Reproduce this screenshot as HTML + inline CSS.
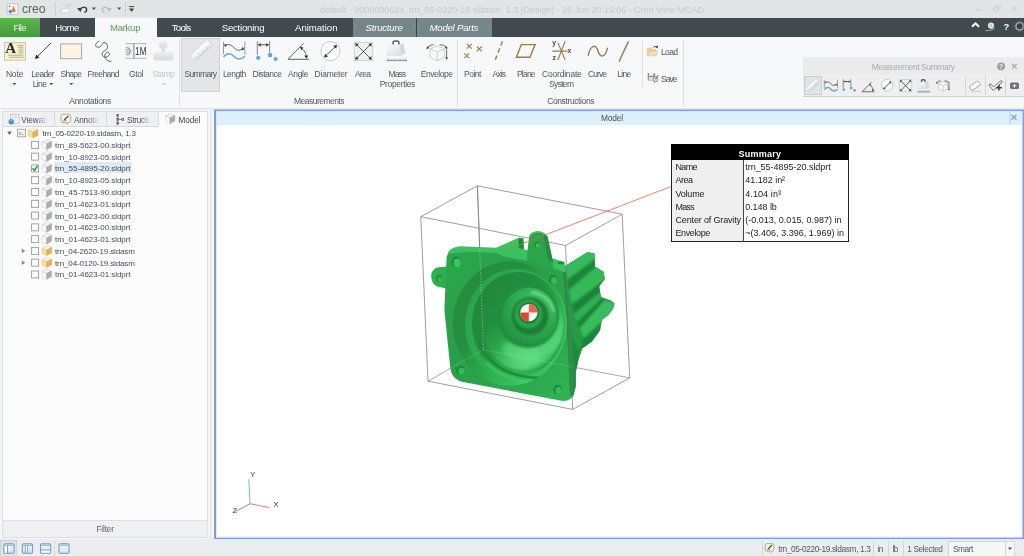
<!DOCTYPE html>
<html><head><meta charset="utf-8">
<style>
*{box-sizing:border-box;margin:0;padding:0}
html,body{width:1024px;height:556px;overflow:hidden;background:#eceeef;font-family:"Liberation Sans",sans-serif;}
.a{position:absolute}
.t{position:absolute;white-space:nowrap;font-family:"Liberation Sans",sans-serif}
svg{position:absolute;overflow:visible}
#title{left:0;top:0;width:1024px;height:18px;background:#e2e5e6}
#tabs{left:0;top:18px;width:1024px;height:19px;background:#414b4e}
#ribbon{left:0;top:37px;width:1024px;height:72px;background:#f7f8f9;border-bottom:1px solid #e4e6e8}
.sep{position:absolute;width:1px;background:#dfe2e4}
#left{left:2px;top:111px;width:206px;height:426.5px;background:#fcfcfc;border:1px solid #dde0e2}
#view{left:215px;top:110.5px;width:808.5px;height:428px;background:#fff}
#vtitle{left:216px;top:111px;width:806.4px;height:13.6px;background:#dcf0fc}
#status{left:0;top:539.4px;width:1024px;height:17px;background:#ecedee}
#w0{position:absolute;left:-8px;top:-8px;width:1040px;height:572px;background:#eceeef;filter:blur(0.4px)}
#w{position:absolute;left:8px;top:8px;width:1024px;height:556px}
</style></head><body><div id="w0"><div id="w">
<div id="title" class="a"></div>
<div class="sep" style="left:55px;top:2px;height:14px;background:#cdd1d3"></div>
<div class="sep" style="left:125px;top:2px;height:14px;background:#cdd1d3"></div>
<div id="tabs" class="a"></div>
<div class="a" style="left:0;top:18px;width:40px;height:19px;background:linear-gradient(180deg,#5fb34d 0%,#4fa844 50%,#429b3d 100%)"></div>
<div class="a" style="left:95px;top:18px;width:61.5px;height:20px;background:#f7f8f9"></div>
<div class="a" style="left:353.3px;top:18px;width:138.3px;height:19px;background:#75868b"></div>
<div class="a" style="left:416px;top:18px;width:1px;height:19px;background:#3a4548"></div>
<div id="ribbon" class="a"></div>
<!-- ribbon separators -->
<div class="sep" style="left:179px;top:40px;height:67px"></div>
<div class="sep" style="left:457px;top:40px;height:67px"></div>
<div class="sep" style="left:641.5px;top:41px;height:47px"></div>
<div class="sep" style="left:682.5px;top:40px;height:67px"></div>
<!-- Summary selected button -->
<div class="a" style="left:181.2px;top:37.5px;width:39px;height:54px;background:#e3e5e6;border:1px solid #cfd2d4"></div>
<!-- Measurement summary panel -->
<div class="a" style="left:802.5px;top:57px;width:222px;height:39.5px;background:#efefef;border-bottom:1px solid #cfd2d3"></div>
<div class="a" style="left:802.5px;top:57px;width:222px;height:18px;background:#eaebeb"></div>
<div class="a" style="left:803.5px;top:75.5px;width:18.5px;height:19.5px;background:#e2e3e4;border:1px solid #c9cccd"></div>
<div class="sep" style="left:965px;top:76px;height:19px;background:#d3d5d6"></div>
<div class="sep" style="left:985px;top:76px;height:19px;background:#d3d5d6"></div>
<div class="sep" style="left:1004.5px;top:76px;height:19px;background:#d3d5d6"></div>
<!-- left panel -->
<div class="a" style="left:0;top:109.6px;width:209.7px;height:429.6px;background:#f5f6f7"></div>
<div id="left" class="a"></div>
<div class="a" style="left:3px;top:112px;width:155px;height:14.5px;background:#eef0f1;border-bottom:1px solid #d8dbdd"></div>
<div class="sep" style="left:54px;top:112px;height:14px;background:#d8dbdd"></div>
<div class="sep" style="left:106px;top:112px;height:14px;background:#d8dbdd"></div>
<div class="sep" style="left:158px;top:112px;height:14px;background:#d8dbdd"></div>
<div class="a" style="left:54px;top:162px;width:78px;height:11px;background:#dde9f3"></div>
<div class="a" style="left:3px;top:520px;width:204px;height:17px;background:#eff0f1;border-top:1px solid #dcdfe0"></div>
<div class="a" style="left:209.7px;top:110px;width:1.8px;height:429px;background:#e2e6e9"></div>
<div class="a" style="left:211.5px;top:110px;width:2.5px;height:429px;background:#f7f8f9"></div>
<!-- viewport -->
<div id="view" class="a"></div>
<div id="vtitle" class="a"></div>
<div class="a" style="left:1009.4px;top:112px;width:1.4px;height:12px;background:#c6dcf6"></div>
<svg class="a" style="left:0;top:0" width="1024" height="556" viewBox="0 0 1024 556"><path fill-rule="evenodd" d="M214,109.6 H1024 V539.4 H214 Z M216,111 V537.4 H1022.4 V111 Z" fill="#809ddb"/><path fill-rule="evenodd" d="M216,111 H1022.4 V537.4 H216 Z M216.6,111.5 V536.8 H1021.8 V111.5 Z" fill="#cfe2fa"/></svg>
<div id="status" class="a"></div>
<!-- status cells -->
<div class="sep" style="left:762px;top:541px;height:15px;background:#d3d6d8"></div>
<div class="sep" style="left:873px;top:541px;height:15px;background:#d3d6d8"></div>
<div class="sep" style="left:888px;top:541px;height:15px;background:#d3d6d8"></div>
<div class="sep" style="left:902.5px;top:541px;height:15px;background:#d3d6d8"></div>
<div class="a" style="left:947.5px;top:540.5px;width:67.5px;height:16px;background:#f5f6f6;border:1px solid #d3d6d8;border-bottom:none"></div>
<div class="sep" style="left:1004.5px;top:541px;height:15px;background:#d3d6d8"></div>
<!-- bottom-left layout icon selected -->
<div class="a" style="left:0.4px;top:539.8px;width:16.7px;height:17px;background:#dfe3e6;border:1px solid #cdd2d5"></div>
<div class="sep" style="left:54px;top:541px;height:15px;background:#d6d9db"></div>
<!-- table -->
<div class="a" style="left:670.5px;top:143.5px;width:178.5px;height:98.5px;background:#fff;border:1px solid #222"></div>
<div class="a" style="left:670.5px;top:143.5px;width:178.5px;height:16px;background:#000"></div>
<div class="a" style="left:671.5px;top:159.5px;width:72px;height:81.5px;background:#efefef"></div>
<div class="a" style="left:743.3px;top:159.5px;width:1px;height:82px;background:#444"></div>
<svg class="a" style="left:0;top:0" width="1024" height="556" viewBox="0 0 1024 556">
<defs>
<linearGradient id="gBody" x1="0" y1="0" x2="1" y2="1">
 <stop offset="0" stop-color="#2fb552"/><stop offset="0.5" stop-color="#27a047"/><stop offset="1" stop-color="#1e8a3c"/>
</linearGradient>
<linearGradient id="gFace" x1="0" y1="0" x2="1" y2="1">
 <stop offset="0" stop-color="#2ba94c"/><stop offset="0.35" stop-color="#2a9e49"/><stop offset="0.7" stop-color="#2ca64c"/><stop offset="1" stop-color="#31b655"/>
</linearGradient>
<radialGradient id="gDish" cx="0.62" cy="0.72" r="0.75">
 <stop offset="0" stop-color="#46c96a"/><stop offset="0.35" stop-color="#2fb052"/><stop offset="0.7" stop-color="#259a45"/><stop offset="1" stop-color="#1f8a3d"/>
</radialGradient>
<radialGradient id="gDish2" cx="0.55" cy="0.75" r="0.8">
 <stop offset="0" stop-color="#5ad77c"/><stop offset="0.3" stop-color="#3cc061"/><stop offset="0.65" stop-color="#2aa64b"/><stop offset="1" stop-color="#239543"/>
</radialGradient>
<radialGradient id="gBoss" cx="0.6" cy="0.35" r="0.7">
 <stop offset="0" stop-color="#4ccf70"/><stop offset="0.5" stop-color="#2fb052"/><stop offset="1" stop-color="#238f41"/>
</radialGradient>
<linearGradient id="gA" x1="0.05" y1="0.2" x2="0.9" y2="0.9">
 <stop offset="0" stop-color="#248c40"/><stop offset="0.3" stop-color="#258f41"/><stop offset="0.55" stop-color="#2aa84b"/><stop offset="0.85" stop-color="#3ec564"/><stop offset="1" stop-color="#35ba5a"/>
</linearGradient>
<linearGradient id="gB" x1="0.05" y1="0.2" x2="0.9" y2="0.9">
 <stop offset="0" stop-color="#2ba34a"/><stop offset="0.5" stop-color="#2dae4f"/><stop offset="1" stop-color="#3cc362"/>
</linearGradient>
<linearGradient id="gC" x1="0.05" y1="0.2" x2="0.9" y2="0.9">
 <stop offset="0" stop-color="#218739"/><stop offset="0.35" stop-color="#238e40"/><stop offset="0.6" stop-color="#2aa84b"/><stop offset="0.85" stop-color="#2fb052"/><stop offset="1" stop-color="#239543"/>
</linearGradient>
<linearGradient id="gD" x1="0.1" y1="0.05" x2="0.72" y2="0.95">
 <stop offset="0" stop-color="#1f883c"/><stop offset="0.35" stop-color="#228f40"/><stop offset="0.58" stop-color="#2ba74b"/><stop offset="0.8" stop-color="#4ccd6f"/><stop offset="0.92" stop-color="#55d578"/><stop offset="1" stop-color="#3cc362"/>
</linearGradient>
<filter id="b1" x="-20%" y="-20%" width="140%" height="140%"><feGaussianBlur stdDeviation="1.2"/></filter>
<filter id="b2" x="-20%" y="-20%" width="140%" height="140%"><feGaussianBlur stdDeviation="2.5"/></filter>
<filter id="b03" x="-20%" y="-20%" width="140%" height="140%"><feGaussianBlur stdDeviation="0.35"/></filter>
<filter id="b05" x="-20%" y="-20%" width="140%" height="140%"><feGaussianBlur stdDeviation="0.5"/></filter>
<clipPath id="cDish"><ellipse cx="509.8" cy="323.6" rx="57" ry="62"/></clipPath>
<clipPath id="cFace"><path d="M448.5,253.6 Q446.6,255 446.5,259 L444.4,310 L450.2,367 Q451,378 460.6,381.5 L560,400.5 Q570.5,402.5 574,394 L575.5,386 L572.5,350 L568.7,300 L566.3,270 L565.4,272.7 L553.5,268.4 L526.6,260.8 L506,257 L496,253 L470,251.8 Z"/></clipPath>
</defs>
<!-- bbox back lines -->
<g stroke="#7c7c7c" stroke-width="0.65" fill="none">
<path d="M477.4,185.8 L483.4,349.7 M483.4,349.7 L629.7,377.9 M483.4,349.7 L428,381.2"/>
</g>
<!-- right body -->
<clipPath id="cBody"><path d="M565,266 L587.6,252 L594.7,253.8 L594.9,266.4 L603.7,271.8 L604.8,279 L599.2,286.2 L601,297 L611,300.5 L614.5,303.2 L613.6,307.7 L609,314.4 L602,319.8 L600,330.6 L592,341.4 L582.2,348.6 L578.6,359.4 L575.9,372 L575.9,386.3 L572,398 L566,330 Z"/></clipPath>
<path d="M565,266 L587.6,252 L594.7,253.8 L594.9,266.4 L603.7,271.8 L604.8,279 L599.2,286.2 L601,297 L611,300.5 L614.5,303.2 L613.6,307.7 L609,314.4 L602,319.8 L600,330.6 L592,341.4 L582.2,348.6 L578.6,359.4 L575.9,372 L575.9,386.3 L572,398 L566,330 Z" fill="#259b45"/>
<g clip-path="url(#cBody)"><g filter="url(#b1)">
<path d="M563,264 L587.6,250 L596,252 L596,258 L566,280 Z" fill="#35bb5b"/>
<path d="M566,281 L596,259 L596,267 L569,290 Z" fill="#1d863b"/>
<path d="M569,290 L596,267 L606,271 L606,278 L572,304 Z" fill="#34b959"/>
<path d="M572,305 L606,279 L600,288 L600,292 L574,314 Z" fill="#1c8239"/>
<path d="M574,314 L600,292 L602,298 L578,322 Z" fill="#2fb153"/>
<path d="M577,322 L602,298 L604,301 L580,328 Z" fill="#1c8239"/>
<path d="M580,328 L604,301 L616,303 L612,312 L584,338 Z" fill="#37bd5d"/>
<path d="M583,339 L610,314 L602,322 L600,332 L590,344 L580,352 Z" fill="#1d863b"/>
<path d="M566,330 L580,352 L576,372 L576,388 L572,400 Z" fill="#1f8a3d"/>
</g></g>
<!-- left ear -->
<path d="M447,266.5 L437,267.5 Q431,270 431.2,276.5 Q431.8,284 437,286.5 L446,288.5 Z" fill="#2db150"/>
<ellipse cx="439.3" cy="278.8" rx="3.2" ry="3.8" fill="#1f8d3e"/>
<ellipse cx="440" cy="279.6" rx="2.2" ry="2.7" fill="#35ba5a"/>
<!-- top face -->
<path d="M447.5,254 L448.5,251.5 Q452,247 460,246.2 L496.1,247.8 L519,237.6 L523.3,238.2 L523.9,249.3 L527.1,250.2 L553.5,258.7 L563.3,261.5 L566.3,268 L565.4,274 L553.5,270 L526.6,262.5 L506,258.5 L496,254.5 L470,253 Z" fill="#39c25f"/>
<path d="M518.7,238.5 L523.3,238.2 L523.9,249.4 L518.6,247.8 Z" fill="#1f8a3d" filter="url(#b03)"/>
<path d="M527.1,264 L527.1,253.3 L529.3,236 Q531.5,231.6 537.9,231.3 Q544,231.4 547.6,237.1 L553,261.9 L553.5,271 Z" fill="#2aa54a"/>
<path d="M543.6,233.4 Q546.2,234.6 547.6,237.1 L553,261.9 L548.3,260 L544,239.5 Z" fill="#228e40" filter="url(#b03)"/>
<path d="M530.3,235.2 Q532.8,232 537.9,231.9 Q542,232 544.2,234" stroke="#40ca68" stroke-width="1.4" fill="none" filter="url(#b03)"/>
<ellipse cx="537.1" cy="244.7" rx="2.8" ry="3" fill="#1f8a3d"/><ellipse cx="537.7" cy="245.4" rx="2" ry="2.2" fill="#3dbe61"/>
<ellipse cx="561.1" cy="263" rx="3.6" ry="1.3" fill="#1f8a3d"/>
<!-- flange front face -->
<path d="M448.5,253.6 Q446.6,255 446.5,259 L444.4,310 L450.2,367 Q451,378 460.6,381.5 L560,400.5 Q570.5,402.5 574,394 L575.5,386 L572.5,350 L568.7,300 L566.3,270 L565.4,272.7 L553.5,268.4 L526.6,260.8 L506,257 L496,253 L470,251.8 Z" fill="url(#gFace)"/>
<g clip-path="url(#cFace)">
<path d="M566,268 L568.7,300 L572.5,350 L575.5,386 L574,396 L570,396 L565.5,300 L563,272 Z" fill="#228f41" filter="url(#b05)"/>
</g>
<!-- dish -->
<ellipse cx="509.8" cy="323.6" rx="57" ry="62" fill="url(#gA)"/>
<g clip-path="url(#cDish)">
<ellipse cx="515.5" cy="325" rx="50.5" ry="56" fill="url(#gB)" filter="url(#b05)"/>
<ellipse cx="518.5" cy="324" rx="46.5" ry="52" fill="url(#gC)" filter="url(#b05)"/>
<ellipse cx="523" cy="323.5" rx="40.5" ry="46.5" fill="url(#gD)" filter="url(#b1)"/>
<ellipse cx="522" cy="352" rx="20" ry="11" fill="#66e088" opacity="0.55" filter="url(#b2)" transform="rotate(16 522 352)"/>
<path d="M478.5,338 C481,352 492,364.5 507,371.5 C520,377 534,378.6 548,377.6" stroke="#1f8a3d" stroke-width="2.6" fill="none" filter="url(#b05)" opacity="0.9"/>
<path d="M486,362 C498,376 520,384 548,382.5" stroke="#43cb69" stroke-width="3" fill="none" filter="url(#b1)" opacity="0.8"/>
<!-- boss -->
<ellipse cx="528" cy="316" rx="31" ry="32" fill="#218e3f" filter="url(#b1)"/>
<ellipse cx="529.5" cy="316" rx="27.5" ry="28.5" fill="url(#gBoss)" filter="url(#b05)"/>
<ellipse cx="530" cy="316" rx="18.5" ry="19" fill="#1b7d37" filter="url(#b1)"/>
<ellipse cx="528.5" cy="314" rx="14" ry="14.5" fill="#2aa54a" filter="url(#b1)"/>
<ellipse cx="528.8" cy="313" rx="10.5" ry="10.8" fill="#1d8239" filter="url(#b05)"/>
<path d="M531,292 Q549,294 554,312" stroke="#7fe39a" stroke-width="2.5" fill="none" filter="url(#b1)" opacity="0.8"/>
</g>
<!-- corner holes -->
<g>
<ellipse cx="456.2" cy="261.8" rx="4.7" ry="5.6" fill="#1f8b3d"/><ellipse cx="457.2" cy="263" rx="3.5" ry="4.2" fill="#3cc663"/>
<ellipse cx="553.2" cy="279.9" rx="4.3" ry="4.8" fill="#1f8b3d"/><ellipse cx="554.1" cy="280.8" rx="3.1" ry="3.5" fill="#35ba5a"/>
<ellipse cx="460.6" cy="370.3" rx="4.3" ry="4.8" fill="#1f8b3d"/><ellipse cx="461.5" cy="371.2" rx="3.1" ry="3.5" fill="#35ba5a"/>
<ellipse cx="557.5" cy="389.5" rx="4.3" ry="4.8" fill="#1f8b3d"/><ellipse cx="558.4" cy="390.4" rx="3.1" ry="3.5" fill="#35ba5a"/>
</g>
<!-- CoG marker -->
<g filter="url(#b03)">
<circle cx="528.8" cy="312.6" r="8.7" fill="#fff"/>
<path d="M528.8,312.6 L528.8,303.9 A8.7,8.7 0 0 1 537.5,312.6 Z" fill="#f0604e"/>
<path d="M528.8,312.6 L528.8,321.3 A8.7,8.7 0 0 1 520.1,312.6 Z" fill="#dc4a2e"/>
</g>
<!-- bbox dashed over part -->
<g stroke="#b9d9c0" stroke-width="0.6" fill="none" stroke-dasharray="1.5 1.5" opacity="0.8">
<path d="M479.7,248 L483.4,349.7 M483.4,349.7 L575,367.3 M483.4,349.7 L451,368"/>
</g>
<!-- bbox front lines -->
<g stroke="#747474" stroke-width="0.7" fill="none">
<path d="M420.8,216.7 L477.4,185.8 L622.2,214.2 L565.5,245.5 Z"/>
<path d="M420.8,216.7 L428,381.2 L572.7,409.4 L629.7,377.9 L622.2,214.2"/>
<path d="M565.5,245.5 L572.7,409.4"/>
<path d="M477.4,185.8 L479.7,248"/>
</g>
<!-- leader -->
<path d="M671,186.5 L546,234.6" stroke="#e06a4e" stroke-width="0.8" fill="none"/>
<path d="M546,234.6 L506,250" stroke="#a58a32" stroke-width="0.8" fill="none"/>
<!-- triad -->
<g stroke-width="0.8" fill="none">
<path d="M250,503.7 L248.8,479" stroke="#55c066"/>
<path d="M250,503.7 L269.5,507.6" stroke="#e0604e"/>
<path d="M250,503.7 L235.5,511.5" stroke="#4a6fc0"/>
</g>
</svg>

<svg class="a" style="left:0;top:0" width="1024" height="556" viewBox="0 0 1024 556">
<defs>
<linearGradient id="gMass" x1="0" y1="0" x2="0.6" y2="1"><stop offset="0" stop-color="#fafbfc"/><stop offset="1" stop-color="#dde2e6"/></linearGradient>
<linearGradient id="gStamp" x1="0" y1="0" x2="0" y2="1"><stop offset="0" stop-color="#eceeef"/><stop offset="1" stop-color="#d6d9db"/></linearGradient>
<linearGradient id="gRuler" x1="0" y1="0" x2="0" y2="1"><stop offset="0" stop-color="#ffffff"/><stop offset="1" stop-color="#e4e9ee"/></linearGradient>
<filter id="ib" x="-20%" y="-20%" width="140%" height="140%"><feGaussianBlur stdDeviation="0.3"/></filter>
<filter id="ib5" x="-20%" y="-20%" width="140%" height="140%"><feGaussianBlur stdDeviation="0.5"/></filter>
<marker id="ah" viewBox="0 0 6 6" refX="5" refY="3" markerWidth="4.2" markerHeight="4.2" orient="auto-start-reverse"><path d="M0,0 L6,3 L0,6 Z" fill="#3c3c3c"/></marker>
<!-- measure icons: drawn with origin at icon centre, "big" size -->
<g id="iRuler"><g transform="rotate(-43)"><rect x="-12" y="-3.8" width="24" height="7.6" rx="0.8" fill="url(#gRuler)" stroke="#c9d0d7" stroke-width="0.7"/>
<path d="M-9,3.8v-3.2 M-6.5,3.8v-2 M-4,3.8v-3.2 M-1.5,3.8v-2 M1,3.8v-3.2 M3.5,3.8v-2 M6,3.8v-3.2 M8.5,3.8v-2" stroke="#8fa6bd" stroke-width="0.6"/></g></g>
<g id="iLength" fill="none"><path d="M-10.6,-9.3 V3 M10.7,-9.3 V3" stroke="#6f6f6f" stroke-width="0.7"/>
<path d="M-9,-5.5 C-3,-9 0,-2 3,-1 C5.5,-0.2 7.5,-1.5 9.2,-2.6" stroke="#444" stroke-width="0.8"/>
<path d="M-10.3,-6.8 L-7,-6.6 L-8.8,-3.8 Z M10.4,-1.2 L7,-1 L8.6,-4.2 Z" fill="#444"/>
<path d="M-10.6,6 C-7,1.5 -3,2 0,5.5 C3,9 7.5,9 10.8,5" stroke="#66adcb" stroke-width="1.6"/></g>
<g id="iDist" fill="none"><path d="M-10,-10 V3.6 M2.3,-10 V1.3" stroke="#666" stroke-width="0.8"/>
<path d="M-8.5,-6.5 H0.8" stroke="#555" stroke-width="1"/>
<path d="M-9.6,-6.5 L-6.6,-8.4 V-4.6 Z M1.9,-6.5 L-1.1,-8.4 V-4.6 Z" fill="#444"/>
<circle cx="-9.1" cy="6.5" r="2.1" fill="#62a8d4"/><circle cx="2.8" cy="3.8" r="2.3" fill="#62a8d4"/><circle cx="8.3" cy="7.7" r="2.1" fill="#62a8d4"/></g>
<g id="iAngle" fill="none"><path d="M5.1,-8 L-10.5,7.9 H10.4" stroke="#555" stroke-width="0.9"/>
<path d="M2.8,-3.2 C6,-1 7.7,2 7.8,5.4" stroke="#444" stroke-width="0.8"/>
<path d="M1.3,-4.6 L4.9,-4 L3,-1.2 Z M7.8,7.4 L5.8,4.2 H9.8 Z" fill="#333"/></g>
<g id="iDiam" fill="none"><circle cx="0" cy="0" r="9.6" stroke="#b9bcbe" stroke-width="0.8" fill="#fafbfb"/>
<path d="M-4.6,4.8 L5,-4.6" stroke="#444" stroke-width="0.9"/>
<path d="M-6.2,6.4 L-5.4,2.6 L-2.4,5.6 Z M6.6,-6.2 L5.8,-2.4 L2.8,-5.4 Z" fill="#333"/></g>
<g id="iArea" fill="none"><rect x="-9.2" y="-9.1" width="18.4" height="18.2" fill="#eff0f1" stroke="#c9cbcd" stroke-width="0.8"/>
<path d="M-6.5,-6.5 L6.5,6.5 M6.5,-6.5 L-6.5,6.5" stroke="#444" stroke-width="0.85"/>
<path d="M-8.3,-8.3 L-4.8,-7.6 L-7.6,-4.8 Z M8.3,-8.3 L4.8,-7.6 L7.6,-4.8 Z M-8.3,8.3 L-4.8,7.6 L-7.6,4.8 Z M8.3,8.3 L4.8,7.6 L7.6,4.8 Z" fill="#333"/></g>
<g id="iMass" fill="none"><path d="M-3.7,-6 V-7.6 Q-3.7,-9.6 -1.6,-9.6 H0.2 Q2.2,-9.6 2.2,-7.6 V-6" stroke="#5a5a5a" stroke-width="1.5"/>
<path d="M-7.6,-5.6 H3.4 L3.9,4.9 H-9.7 Z" fill="url(#gMass)" stroke="#d9dde1" stroke-width="0.5"/>
<path d="M3.4,-5.6 L6.2,-7.5 L8.8,2.4 L3.9,4.9 Z" fill="#cbdae6" stroke="#d0d8df" stroke-width="0.4"/>
<path d="M-10.4,9.9 H10.4" stroke="#9a9da0" stroke-width="1.3"/><path d="M-8.6,9.5 v-2 M-5.6,9.5 v-1.2 M-2.6,9.5 v-2 M0.4,9.5 v-1.2 M3.4,9.5 v-2 M6.4,9.5 v-1.2 M9,9.5 v-2" stroke="#9a9da0" stroke-width="0.7"/></g>
<g id="iEnv" fill="none"><path d="M-6.8,-3.5 L0.2,-6.5 L7.3,-3.5 L0.2,-0.3 Z M-6.8,-3.5 V5 L0.2,8.2 V-0.3 M0.2,8.2 L7.3,5 V-3.5" stroke="#c2c5c7" stroke-width="0.8" fill="#fbfbfb"/>
<path d="M-9.7,-4.6 C-8.2,-7 -5.5,-7.6 -3.3,-7.6 M2.6,-7.6 C5.5,-7.6 8.2,-7 9.6,-4.7 M9.6,-3 V6.4" stroke="#555" stroke-width="0.9"/>
<path d="M-10.6,-3.2 L-9.9,-6.2 L-7.6,-4.3 Z M10.5,-3.4 L7.6,-4.5 L9.8,-6.4 Z M9.6,7.4 L8.2,5 H11 Z" fill="#444"/></g>
<g id="iRulerS"><g transform="rotate(-43)"><rect x="-12" y="-3.8" width="24" height="7.6" rx="0.8" fill="url(#gRuler)" stroke="#c9d0d7" stroke-width="1.05"/>
<path d="M-9,3.8v-3.2 M-6.5,3.8v-2 M-4,3.8v-3.2 M-1.5,3.8v-2 M1,3.8v-3.2 M3.5,3.8v-2 M6,3.8v-3.2 M8.5,3.8v-2" stroke="#8fa6bd" stroke-width="0.90"/></g></g>
<g id="iLengthS" fill="none"><path d="M-10.6,-9.3 V3 M10.7,-9.3 V3" stroke="#6f6f6f" stroke-width="1.05"/>
<path d="M-9,-5.5 C-3,-9 0,-2 3,-1 C5.5,-0.2 7.5,-1.5 9.2,-2.6" stroke="#444" stroke-width="1.20"/>
<path d="M-10.3,-6.8 L-7,-6.6 L-8.8,-3.8 Z M10.4,-1.2 L7,-1 L8.6,-4.2 Z" fill="#444"/>
<path d="M-10.6,6 C-7,1.5 -3,2 0,5.5 C3,9 7.5,9 10.8,5" stroke="#66adcb" stroke-width="2.40"/></g>
<g id="iDistS" fill="none"><path d="M-10,-10 V3.6 M2.3,-10 V1.3" stroke="#666" stroke-width="1.20"/>
<path d="M-8.5,-6.5 H0.8" stroke="#555" stroke-width="1.50"/>
<path d="M-9.6,-6.5 L-6.6,-8.4 V-4.6 Z M1.9,-6.5 L-1.1,-8.4 V-4.6 Z" fill="#444"/>
<circle cx="-9.1" cy="6.5" r="2.1" fill="#62a8d4"/><circle cx="2.8" cy="3.8" r="2.3" fill="#62a8d4"/><circle cx="8.3" cy="7.7" r="2.1" fill="#62a8d4"/></g>
<g id="iAngleS" fill="none"><path d="M5.1,-8 L-10.5,7.9 H10.4" stroke="#555" stroke-width="1.35"/>
<path d="M2.8,-3.2 C6,-1 7.7,2 7.8,5.4" stroke="#444" stroke-width="1.20"/>
<path d="M1.3,-4.6 L4.9,-4 L3,-1.2 Z M7.8,7.4 L5.8,4.2 H9.8 Z" fill="#333"/></g>
<g id="iDiamS" fill="none"><circle cx="0" cy="0" r="9.6" stroke="#b9bcbe" stroke-width="1.20" fill="#fafbfb"/>
<path d="M-4.6,4.8 L5,-4.6" stroke="#444" stroke-width="1.35"/>
<path d="M-6.2,6.4 L-5.4,2.6 L-2.4,5.6 Z M6.6,-6.2 L5.8,-2.4 L2.8,-5.4 Z" fill="#333"/></g>
<g id="iAreaS" fill="none"><rect x="-9.2" y="-9.1" width="18.4" height="18.2" fill="#eff0f1" stroke="#c9cbcd" stroke-width="1.20"/>
<path d="M-6.5,-6.5 L6.5,6.5 M6.5,-6.5 L-6.5,6.5" stroke="#444" stroke-width="1.27"/>
<path d="M-8.3,-8.3 L-4.8,-7.6 L-7.6,-4.8 Z M8.3,-8.3 L4.8,-7.6 L7.6,-4.8 Z M-8.3,8.3 L-4.8,7.6 L-7.6,4.8 Z M8.3,8.3 L4.8,7.6 L7.6,4.8 Z" fill="#333"/></g>
<g id="iMassS" fill="none"><path d="M-3.7,-6 V-7.6 Q-3.7,-9.6 -1.6,-9.6 H0.2 Q2.2,-9.6 2.2,-7.6 V-6" stroke="#5a5a5a" stroke-width="2.25"/>
<path d="M-7.6,-5.6 H3.4 L3.9,4.9 H-9.7 Z" fill="url(#gMass)" stroke="#d9dde1" stroke-width="0.75"/>
<path d="M3.4,-5.6 L6.2,-7.5 L8.8,2.4 L3.9,4.9 Z" fill="#cbdae6" stroke="#d0d8df" stroke-width="0.60"/>
<path d="M-10.4,9.9 H10.4" stroke="#9a9da0" stroke-width="1.95"/><path d="M-8.6,9.5 v-2 M-5.6,9.5 v-1.2 M-2.6,9.5 v-2 M0.4,9.5 v-1.2 M3.4,9.5 v-2 M6.4,9.5 v-1.2 M9,9.5 v-2" stroke="#9a9da0" stroke-width="1.05"/></g>
<g id="iEnvS" fill="none"><path d="M-6.8,-3.5 L0.2,-6.5 L7.3,-3.5 L0.2,-0.3 Z M-6.8,-3.5 V5 L0.2,8.2 V-0.3 M0.2,8.2 L7.3,5 V-3.5" stroke="#c2c5c7" stroke-width="1.20" fill="#fbfbfb"/>
<path d="M-9.7,-4.6 C-8.2,-7 -5.5,-7.6 -3.3,-7.6 M2.6,-7.6 C5.5,-7.6 8.2,-7 9.6,-4.7 M9.6,-3 V6.4" stroke="#555" stroke-width="1.35"/>
<path d="M-10.6,-3.2 L-9.9,-6.2 L-7.6,-4.3 Z M10.5,-3.4 L7.6,-4.5 L9.8,-6.4 Z M9.6,7.4 L8.2,5 H11 Z" fill="#444"/></g>
<!-- tree icons -->
<g id="cubeG"><path d="M0,2.4 L5.2,0 L9.6,1.7 L4.6,4.3 Z" fill="#f3f3f3" stroke="#c9c9c9" stroke-width="0.5"/><path d="M0,2.4 L4.6,4.3 V10.2 L0,7.9 Z" fill="#fbfbfb" stroke="#c4c4c4" stroke-width="0.5"/><path d="M4.6,4.3 L9.6,1.7 V7.4 L4.6,10.2 Z" fill="#adadad" stroke="#9f9f9f" stroke-width="0.4"/></g>
<g id="cubeO"><path d="M0,2.4 L5.2,0 L9.8,1.7 L4.7,4.3 Z" fill="#fdf4df" stroke="#e6c98a" stroke-width="0.5"/><path d="M0,2.4 L4.7,4.3 V10 L0,7.8 Z" fill="#f9dfa6" stroke="#e4c07a" stroke-width="0.5"/><path d="M4.7,4.3 L9.8,1.7 V7.3 L4.7,10 Z" fill="#e1b35f" stroke="#d6a54e" stroke-width="0.4"/></g>
<g id="cb"><rect x="0.5" y="0.5" width="7" height="7" fill="#fcfcfc" stroke="#999" stroke-width="0.9"/></g>
</defs>
<g id="titleicons">
<rect x="7.3" y="3.6" width="10.8" height="10.9" rx="1" fill="#f4f1ea" stroke="#b9bcbd" stroke-width="0.7"/>
<path d="M11,12 L13.2,5.2 L15.8,12 Z" fill="#f0b24a"/><path d="M12.6,11.5 L13.6,6.6 L15,11.5 Z" fill="#e0503a"/><circle cx="10.4" cy="11.6" r="1.8" fill="#4a90d9"/><circle cx="9.6" cy="6.2" r="0.7" fill="#4a6a9a"/>
<path d="M60.6,13 V6.6 Q60.6,5.8 61.4,5.8 H64 L65,6.9 H67.5 V8.3" fill="#eceeef" stroke="#c9cdcf" stroke-width="0.7"/>
<path d="M60.6,13 L62.6,8.4 H70.6 L68.6,13 Z" fill="#f3f4f5" stroke="#c9cdcf" stroke-width="0.7"/>
<path d="M66.6,5.6 C67.8,4.6 69,4.6 70,5" stroke="#bfc3c5" stroke-width="0.8" fill="none"/><path d="M70.8,4 L70.7,6.6 L68.6,5.2 Z" fill="#bfc3c5"/>
<path d="M80.2,9.6 C82,6.4 86.2,6.4 86.6,9.4 C86.8,11 85.8,12 84.4,12.2" stroke="#363c3f" stroke-width="1.4" fill="none"/><path d="M77,8.2 L81.6,7.8 L80.6,12.2 Z" fill="#363c3f"/>
<path d="M91.7,7.6 H96 L93.85,10 Z" fill="#4a5053"/>
<path d="M108.8,9.6 C107,6.4 102.8,6.4 102.4,9.4 C102.2,11 103.2,12 104.6,12.2" stroke="#b7bcbf" stroke-width="1.4" fill="none"/><path d="M112,8.2 L107.4,7.8 L108.4,12.2 Z" fill="#b7bcbf"/>
<path d="M117,7.6 H121.3 L119.15,10 Z" fill="#4a5053"/>
<path d="M129,6.6 H134.2" stroke="#4a4626" stroke-width="1"/><path d="M129,8.6 H134.2 L131.6,11.9 Z" fill="#4a4626"/>
<path d="M976.2,10 H982" stroke="#c3c7ca" stroke-width="0.9"/>
<path d="M993.4,8 H998.4 V11.2 H993.4 Z M995,8 V6 H1000.2 V9.4 H998.4" stroke="#c6cacc" stroke-width="0.8" fill="none"/>
<path d="M1011.6,6 L1017,11 M1017,6 L1011.6,11" stroke="#c3c7ca" stroke-width="0.9"/>
</g>
<g id="tabicons">
<path d="M972,26.8 L975.5,23.4 L979,26.8" stroke="#fff" stroke-width="2" fill="none"/>
<circle cx="991" cy="25.6" r="3.1" fill="#dfe2e3"/><circle cx="991" cy="25.4" r="1.1" fill="#b4babc"/><path d="M985.5,30.6 C989,30.6 993.5,30.4 994.5,27.4" stroke="#c9cdcf" stroke-width="0.8" fill="none"/>
<text x="1006.4" y="30.2" font-family="Liberation Sans" font-weight="bold" font-size="9.5" fill="#fff" text-anchor="middle">?</text>
<circle cx="1019.6" cy="26.3" r="3.6" fill="#394245" stroke="#aeb7ba" stroke-width="1"/><circle cx="1019.6" cy="26.3" r="4.6" fill="none" stroke="#aeb7ba" stroke-width="1" stroke-dasharray="1.3 1.1"/>
<g fill="#9fb0b4"><rect x="355.2" y="25" width="0.8" height="0.8"/><rect x="355.2" y="27" width="0.8" height="0.8"/><rect x="355.2" y="29" width="0.8" height="0.8"/>
<rect x="413.6" y="25" width="0.8" height="0.8"/><rect x="413.6" y="27" width="0.8" height="0.8"/><rect x="413.6" y="29" width="0.8" height="0.8"/>
<rect x="418.8" y="25" width="0.8" height="0.8"/><rect x="418.8" y="27" width="0.8" height="0.8"/><rect x="418.8" y="29" width="0.8" height="0.8"/>
<rect x="489.2" y="25" width="0.8" height="0.8"/><rect x="489.2" y="27" width="0.8" height="0.8"/><rect x="489.2" y="29" width="0.8" height="0.8"/></g>
</g>
<g id="annot">
<rect x="4.4" y="42.4" width="21.2" height="17.8" fill="#f7efcd" stroke="#b7b7a6" stroke-width="0.7"/>
<text x="5.2" y="53.4" font-family="Liberation Serif" font-weight="bold" font-size="15" fill="#2e2e2e">A</text>
<g stroke="#8f8a66" stroke-width="0.6"><path d="M17,45.4H23.4 M18,47.3H23.4 M18.6,49.2H23.4 M18,51.1H23.4 M18.6,53H23.4 M8,55.2H23.4 M9,57.3H23.4"/></g>
<path d="M51.2,42.8 L37,56.9" stroke="#3a3a3a" stroke-width="0.9"/><path d="M35,58.9 L36.2,54.6 L39.4,57.8 Z" fill="#222"/>
<rect x="60.6" y="43.9" width="21" height="14.8" fill="#fdf3e4" stroke="#a8a8a8" stroke-width="1"/>
<path d="M99.2,41.2 C96.2,42.4 94.6,45.6 96.4,46.8 C98.6,48.2 101.6,46.2 102.6,43.6 C103.6,41 106.6,42.8 107.4,45.6 C108.2,48.6 105.8,50.2 103.4,51.6 C101,53.2 102.2,57 105.2,57.2 C108.2,57.4 110.4,54.6 109,52.8 C107.6,51.2 104.6,53.2 104.8,56 C105,59.4 108,61.4 111.4,61.6" stroke="#3e3e3e" stroke-width="0.8" fill="none"/>
<g><path d="M125.2,43.6H146.6 M125.2,58.3H146.6" stroke="#9fa2a4" stroke-width="0.8"/><rect x="125.2" y="44" width="8.6" height="14" fill="#eff0f1"/><path d="M133.9,43.6V58.3" stroke="#666" stroke-width="0.8"/>
<path d="M126.4,47.4 A4,3.8 0 0 1 126.4,55" stroke="#777" stroke-width="0.8" fill="none"/><path d="M125.4,49.4H129.6 M125.4,51.2H130.6 M125.4,53H129.6" stroke="#8a8a8a" stroke-width="0.6"/>
<text x="135.3" y="54.7" font-family="Liberation Sans" font-size="10.4" fill="#2a2a2a" textLength="11.2" lengthAdjust="spacingAndGlyphs">1M</text></g>
<g filter="url(#ib)"><circle cx="163.3" cy="44.9" r="4.3" fill="url(#gStamp)"/><rect x="161.9" y="48" width="2.8" height="5" fill="#dcdfe1"/><path d="M155.2,52 H171.6 Q173.4,52 173.4,54 V58.6 Q173.4,60.6 171.6,60.6 H155.2 Q153.4,60.6 153.4,58.6 V54 Q153.4,52 155.2,52 Z" fill="url(#gStamp)"/></g>
<path d="M12.3,82.9 H16.5 L14.4,85.2 Z" fill="#50585c"/><path d="M49.2,82.9 H53.4 L51.3,85.2 Z" fill="#50585c"/><path d="M69.2,82.9 H73.4 L71.3,85.2 Z" fill="#50585c"/><path d="M162,82.9 H166.2 L164.1,85.2 Z" fill="#c8cccd"/>
</g>
<use href="#iRuler" transform="translate(201.1,50.5)"/>
<use href="#iLength" transform="translate(234.1,51)"/>
<use href="#iDist" transform="translate(267.3,51.3)"/>
<use href="#iAngle" transform="translate(298.5,51.4)"/>
<use href="#iDiam" transform="translate(330.4,51.1)"/>
<use href="#iArea" transform="translate(363.5,51.5)"/>
<use href="#iMass" transform="translate(396.7,50.6)"/>
<use href="#iEnv" transform="translate(437,52.4)"/>
<use href="#iRulerS" transform="translate(812.4,85.3) scale(0.62)"/>
<use href="#iLengthS" transform="translate(830.9,85.9) scale(0.62)"/>
<use href="#iDistS" transform="translate(849.4,85.6) scale(0.62)"/>
<use href="#iAngleS" transform="translate(868.3,87) scale(0.6)"/>
<use href="#iDiamS" transform="translate(887.1,85.3) scale(0.61)"/>
<use href="#iAreaS" transform="translate(905.6,85.7) scale(0.67)"/>
<use href="#iMassS" transform="translate(923.7,85.7) scale(0.62)"/>
<use href="#iEnvS" transform="translate(942.8,85.8) scale(0.64)"/>
<g id="constr" fill="none" stroke="#9c7d48">
<g stroke-width="1.1"><path d="M466.9,43.9 l4.8,4.8 m0,-4.8 l-4.8,4.8 M476.9,46.5 l4.8,4.8 m0,-4.8 l-4.8,4.8 M464.3,53.3 l4.8,4.8 m0,-4.8 l-4.8,4.8"/></g>
<path d="M502.5,41.3 L494.8,60.8" stroke-width="1.4" stroke-dasharray="4.6 3"/>
<path d="M521.3,44.6 H535.1 L529.9,57.2 H516.4 Z" stroke-width="1.4"/>
<path d="M552.3,51.1 H567.5 M557.9,42.6 L565.2,60 M565.2,41.3 L557.9,60" stroke-width="1.1"/>
<path d="M588.2,55.8 C590,45 596,43.5 598,51 C600,58.5 605.5,57.5 607.6,47.6" stroke-width="1.4"/>
<path d="M628.5,41.4 L619,61.6" stroke-width="1.4"/>
</g>
<g font-family="Liberation Sans" font-weight="bold" font-size="6.8" fill="#4a4a4a"><text x="552.2" y="45.2">y</text><text x="567.6" y="53.4">x</text><text x="552.4" y="60.4">z</text></g>
<g id="loadsave">
<path d="M647.4,55.6 V49.2 Q647.4,48.2 648.4,48.2 H651.2 L652.2,49.4 H655.4 V51" fill="#e9cd93" stroke="#d7b777" stroke-width="0.5"/>
<path d="M647.4,55.8 L649.2,51 H657.8 L656,55.8 Z" fill="#f3dfae" stroke="#d7b777" stroke-width="0.5"/>
<path d="M653.4,47.4 C654.6,46.4 655.6,46.3 656.6,46.6" stroke="#333" stroke-width="0.9" fill="none"/><path d="M657.9,45.4 L657.7,48.5 L655.3,47 Z" fill="#333"/>
<path d="M647.7,73 H654.4 L655.2,73.8 V80.4 H647.7 Z" fill="#8a8d8f"/><rect x="649" y="73" width="4.4" height="2.8" fill="#eceeef"/><rect x="648.8" y="77" width="5.2" height="3.4" fill="#d9dcde"/>
<circle cx="655.5" cy="79.3" r="2.5" fill="#ead7a6" stroke="#7b6a3e" stroke-width="0.6"/><path d="M655,81.6 L654.2,83.2" stroke="#7b6a3e" stroke-width="0.6"/><path d="M658.2,75 L655.6,79.2" stroke="#555" stroke-width="0.9"/>
</g>
<g id="panelicons">
<circle cx="1001.1" cy="66.3" r="3.9" fill="#9a9d9f"/><text x="1001.1" y="68.7" font-family="Liberation Sans" font-weight="bold" font-size="6.6" fill="#f4f4f4" text-anchor="middle">?</text>
<path d="M1012.1,64 L1016.7,68.6 M1016.7,64 L1012.1,68.6" stroke="#a6aaac" stroke-width="1.3"/>
<g transform="translate(974.8,85.7) rotate(-33)"><rect x="-5.4" y="-2.5" width="10.8" height="5" rx="1.6" fill="#fff" stroke="#9a9da0" stroke-width="0.8"/></g><path d="M971.5,91.3 H981" stroke="#b5b8ba" stroke-width="0.7"/>
<path d="M988.9,85 L990.7,83.9 L993.5,87 L1001,80.6 L1002.4,81.8 L993.3,90.4 Z" fill="#fff" stroke="#4a4a4a" stroke-width="0.8"/>
<path d="M996,87.7 H1001.9 M998.95,84.8 V90.6" stroke="#3c3c3c" stroke-width="1.5"/>
<rect x="1010.1" y="82.5" width="8.8" height="6.6" rx="1.6" fill="#686b6d"/><path d="M1012.3,85.8 H1016.7 M1014.5,83.8 V87.8" stroke="#f0f0f0" stroke-width="1.1"/>
</g>
<g id="lefttabs">
<rect x="10.6" y="114.6" width="8.4" height="8.6" fill="#f4f5f6" stroke="#b4b9bd" stroke-width="0.6"/><path d="M12,116.4H17.6 M12,118H17.6" stroke="#c3c7ca" stroke-width="0.6"/><circle cx="11.2" cy="121.8" r="2.7" fill="#4b8fd0"/><path d="M9.6,120.6 C10.6,120 11.8,120.4 12.4,121.4" stroke="#bfe0f5" stroke-width="0.7" fill="none"/>
<rect x="61" y="114.2" width="9.6" height="8.4" rx="2" fill="#f8f3e4" stroke="#a99a6e" stroke-width="0.8"/><path d="M66,122.6 L67.2,124.4 L68,122.6" fill="#f8f3e4" stroke="#a99a6e" stroke-width="0.6"/><path d="M68.4,115.8 L64.2,120" stroke="#3c3c3c" stroke-width="1.1"/><path d="M62.6,120.8 H66.6" stroke="#555" stroke-width="0.6"/>
<g fill="none" stroke="#4d5457" stroke-width="0.7"><rect x="116.9" y="114.5" width="1.7" height="1.7"/><rect x="116.9" y="118.6" width="1.7" height="1.7"/><rect x="116.9" y="122.6" width="1.7" height="1.7"/><rect x="122" y="118.6" width="1.7" height="1.7"/><path d="M117.75,116.2V118.6 M117.75,120.3V122.6 M118.6,119.45H122"/></g>
<use href="#cubeG" transform="translate(165.3,113.6)"/>
</g>
<g id="tree">
<path d="M7.2,131.5 H11.8 L9.5,135.29999999999998 Z" fill="#6a6f72"/>
<rect x="17.6" y="129.2" width="8" height="7.6" fill="#f1f1f1" stroke="#9b9b9b" stroke-width="0.8"/><path d="M19.4,134.7h1.4v-2h-1.4z M22,134.7h1.6" stroke="#8a8a8a" stroke-width="0.6" fill="none"/>
<use href="#cubeO" transform="translate(28.2,127.89999999999999)"/>
<use href="#cb" transform="translate(31.1,140.88)"/>
<use href="#cubeG" transform="translate(42,139.58)"/>
<use href="#cb" transform="translate(31.1,152.66)"/>
<use href="#cubeG" transform="translate(42,151.36)"/>
<use href="#cb" transform="translate(31.1,164.44)"/>
<use href="#cubeG" transform="translate(42,163.14)"/>
<path d="M32.6,168.24 L34.4,170.44 L37.6,165.84" stroke="#2f9a3a" stroke-width="1.5" fill="none"/>
<use href="#cb" transform="translate(31.1,176.22)"/>
<use href="#cubeG" transform="translate(42,174.92)"/>
<use href="#cb" transform="translate(31.1,188.00)"/>
<use href="#cubeG" transform="translate(42,186.70)"/>
<use href="#cb" transform="translate(31.1,199.78)"/>
<use href="#cubeG" transform="translate(42,198.48)"/>
<use href="#cb" transform="translate(31.1,211.56)"/>
<use href="#cubeG" transform="translate(42,210.26)"/>
<use href="#cb" transform="translate(31.1,223.34)"/>
<use href="#cubeG" transform="translate(42,222.04)"/>
<use href="#cb" transform="translate(31.1,235.12)"/>
<use href="#cubeG" transform="translate(42,233.82)"/>
<use href="#cb" transform="translate(31.1,246.90)"/>
<use href="#cubeO" transform="translate(42,245.60)"/>
<path d="M21.8,248.60 L25.2,250.90 L21.8,253.20 Z" fill="#868b8e"/>
<use href="#cb" transform="translate(31.1,258.68)"/>
<use href="#cubeO" transform="translate(42,257.38)"/>
<path d="M21.8,260.38 L25.2,262.68 L21.8,264.98 Z" fill="#868b8e"/>
<use href="#cb" transform="translate(31.1,270.46)"/>
<use href="#cubeG" transform="translate(42,269.16)"/>
</g>
<defs><linearGradient id="gBl" x1="0" y1="0" x2="0" y2="1"><stop offset="0" stop-color="#f4f8fa"/><stop offset="1" stop-color="#d3e2ea"/></linearGradient></defs>
<g id="bl" fill="url(#gBl)" stroke="#74a0ba" stroke-width="1.1" filter="url(#ib)">
<rect x="3.9" y="543.7" width="10.2" height="9.6" rx="1.4"/><rect x="4.9" y="545.6" width="2.2" height="7" fill="#fff" stroke="none"/><path d="M4.4,545.2H13.6 M7.5,545.4V553" fill="none" stroke-width="0.9"/>
<rect x="22.3" y="543.7" width="10.2" height="9.6" rx="1.4"/><path d="M22.8,545.2H32 M25.4,545.4V553 M27.4,545.4V553" fill="none" stroke-width="0.9"/><rect x="25.9" y="545.8" width="1" height="6.8" fill="#fff" stroke="none"/>
<rect x="40.5" y="543.7" width="10.2" height="9.6" rx="1.4"/><rect x="41.4" y="550.4" width="8.4" height="2.2" fill="#fff" stroke="none"/><path d="M41,545.2H50.2 M41,550H50.2" fill="none" stroke-width="0.9"/>
<rect x="58.9" y="543.7" width="10.2" height="9.6" rx="1.4"/><path d="M59.4,545.2H68.6" fill="none" stroke-width="0.9"/>
</g>
<g id="st">
<rect x="765.2" y="543.6" width="8.6" height="7.6" rx="1.8" fill="#f8f3e4" stroke="#a99a6e" stroke-width="0.8"/><path d="M769.6,551.2 L770.6,552.8 L771.4,551.2" fill="#f8f3e4" stroke="#a99a6e" stroke-width="0.6"/><path d="M772,545 L768.2,548.8" stroke="#3c3c3c" stroke-width="1.1"/><path d="M766.8,549.6H770" stroke="#555" stroke-width="0.6"/>
<path d="M1007.8,547.4 H1012.2 L1010,550 Z" fill="#4d5457"/>
<path d="M1011.6,115 L1016.4,119.8 M1016.4,115 L1011.6,119.8" stroke="#93a3b2" stroke-width="1.5"/>
</g>
</svg>
<span class="t" style="left:22.00px;top:2.60px;font-size:12.3px;line-height:12.3px;letter-spacing:-0.141px;color:#5d6366;">creo</span>
<span class="t" style="left:319.70px;top:5.60px;font-size:9px;line-height:9px;letter-spacing:-0.036px;color:#c6cacc;">default - 0000000624, trn_05-0220-19.sldasm, 1.3 (Design) - 26 Jun 20 19:06 - Creo View MCAD</span>
<span class="t" style="left:13.50px;top:23.20px;font-size:9.6px;line-height:9.6px;letter-spacing:-0.823px;color:#eaf6e6;">File</span>
<span class="t" style="left:55.25px;top:23.20px;font-size:9.6px;line-height:9.6px;letter-spacing:-0.481px;color:#ffffff;">Home</span>
<span class="t" style="left:110.00px;top:23.20px;font-size:9.6px;line-height:9.6px;letter-spacing:-0.300px;color:#5b9a58;">Markup</span>
<span class="t" style="left:171.75px;top:23.20px;font-size:9.6px;line-height:9.6px;letter-spacing:-0.727px;color:#ffffff;">Tools</span>
<span class="t" style="left:221.75px;top:23.20px;font-size:9.6px;line-height:9.6px;letter-spacing:-0.229px;color:#ffffff;">Sectioning</span>
<span class="t" style="left:295.00px;top:23.20px;font-size:9.6px;line-height:9.6px;letter-spacing:-0.021px;color:#ffffff;">Animation</span>
<span class="t" style="left:365.50px;top:23.20px;font-size:9.6px;line-height:9.6px;letter-spacing:-0.211px;color:#ffffff;font-style:italic;">Structure</span>
<span class="t" style="left:429.50px;top:23.20px;font-size:9.6px;line-height:9.6px;letter-spacing:-0.219px;color:#ffffff;font-style:italic;">Model Parts</span>
<span class="t" style="left:5.90px;top:69.70px;font-size:8.5px;line-height:8.5px;letter-spacing:-0.156px;color:#50585c;">Note</span>
<span class="t" style="left:31.25px;top:69.70px;font-size:8.5px;line-height:8.5px;letter-spacing:-0.604px;color:#50585c;">Leader</span>
<span class="t" style="left:32.80px;top:80.20px;font-size:8.5px;line-height:8.5px;letter-spacing:-0.659px;color:#50585c;">Line</span>
<span class="t" style="left:60.50px;top:69.70px;font-size:8.5px;line-height:8.5px;letter-spacing:-0.773px;color:#50585c;">Shape</span>
<span class="t" style="left:87.50px;top:69.70px;font-size:8.5px;line-height:8.5px;letter-spacing:-0.627px;color:#50585c;">Freehand</span>
<span class="t" style="left:129.00px;top:69.70px;font-size:8.5px;line-height:8.5px;letter-spacing:-0.365px;color:#50585c;">Gtol</span>
<span class="t" style="left:152.30px;top:69.70px;font-size:8.5px;line-height:8.5px;letter-spacing:-0.520px;color:#c3c7c9;">Stamp</span>
<span class="t" style="left:69.30px;top:96.60px;font-size:8.5px;line-height:8.5px;letter-spacing:-0.291px;color:#50585c;">Annotations</span>
<span class="t" style="left:184.40px;top:69.70px;font-size:8.5px;line-height:8.5px;letter-spacing:-0.629px;color:#50585c;">Summary</span>
<span class="t" style="left:222.90px;top:69.70px;font-size:8.5px;line-height:8.5px;letter-spacing:-0.520px;color:#50585c;">Length</span>
<span class="t" style="left:252.50px;top:69.70px;font-size:8.5px;line-height:8.5px;letter-spacing:-0.511px;color:#50585c;">Distance</span>
<span class="t" style="left:287.90px;top:69.70px;font-size:8.5px;line-height:8.5px;letter-spacing:-0.312px;color:#50585c;">Angle</span>
<span class="t" style="left:314.60px;top:69.70px;font-size:8.5px;line-height:8.5px;letter-spacing:-0.226px;color:#50585c;">Diameter</span>
<span class="t" style="left:355.00px;top:69.70px;font-size:8.5px;line-height:8.5px;letter-spacing:-0.656px;color:#50585c;">Area</span>
<span class="t" style="left:388.60px;top:69.70px;font-size:8.5px;line-height:8.5px;letter-spacing:-0.900px;color:#50585c;">Mass</span>
<span class="t" style="left:379.80px;top:80.20px;font-size:8.5px;line-height:8.5px;letter-spacing:-0.361px;color:#50585c;">Properties</span>
<span class="t" style="left:420.80px;top:69.70px;font-size:8.5px;line-height:8.5px;letter-spacing:-0.465px;color:#50585c;">Envelope</span>
<span class="t" style="left:294.00px;top:96.60px;font-size:8.5px;line-height:8.5px;letter-spacing:-0.520px;color:#50585c;">Measurements</span>
<span class="t" style="left:464.10px;top:69.70px;font-size:8.5px;line-height:8.5px;letter-spacing:-0.544px;color:#50585c;">Point</span>
<span class="t" style="left:492.50px;top:69.70px;font-size:8.5px;line-height:8.5px;letter-spacing:-0.821px;color:#50585c;">Axis</span>
<span class="t" style="left:516.90px;top:69.70px;font-size:8.5px;line-height:8.5px;letter-spacing:-0.762px;color:#50585c;">Plane</span>
<span class="t" style="left:542.10px;top:69.70px;font-size:8.5px;line-height:8.5px;letter-spacing:-0.210px;color:#50585c;">Coordinate</span>
<span class="t" style="left:549.10px;top:80.20px;font-size:8.5px;line-height:8.5px;letter-spacing:-0.689px;color:#50585c;">System</span>
<span class="t" style="left:588.00px;top:69.70px;font-size:8.5px;line-height:8.5px;letter-spacing:-0.897px;color:#50585c;">Curve</span>
<span class="t" style="left:617.30px;top:69.70px;font-size:8.5px;line-height:8.5px;letter-spacing:-0.726px;color:#50585c;">Line</span>
<span class="t" style="left:547.20px;top:96.60px;font-size:8.5px;line-height:8.5px;letter-spacing:-0.389px;color:#50585c;">Constructions</span>
<span class="t" style="left:660.90px;top:48.20px;font-size:8.5px;line-height:8.5px;letter-spacing:-0.607px;color:#50585c;">Load</span>
<span class="t" style="left:660.90px;top:75.20px;font-size:8.5px;line-height:8.5px;letter-spacing:-0.900px;color:#50585c;">Save</span>
<span class="t" style="left:871.80px;top:62.60px;font-size:8.5px;line-height:8.5px;letter-spacing:-0.417px;color:#a7adb0;">Measurement Summary</span>
<span class="t" style="left:21.30px;top:116.60px;font-size:8.2px;line-height:8.2px;letter-spacing:-0.044px;color:#4a5256;-webkit-mask-image:linear-gradient(90deg,#000 55%,transparent 100%);">Viewab</span>
<span class="t" style="left:74.10px;top:116.60px;font-size:8.2px;line-height:8.2px;letter-spacing:-0.251px;color:#4a5256;-webkit-mask-image:linear-gradient(90deg,#000 55%,transparent 100%);">Annota</span>
<span class="t" style="left:126.90px;top:116.60px;font-size:8.2px;line-height:8.2px;letter-spacing:-0.209px;color:#4a5256;-webkit-mask-image:linear-gradient(90deg,#000 55%,transparent 100%);">Structu</span>
<span class="t" style="left:178.60px;top:116.60px;font-size:8.2px;line-height:8.2px;letter-spacing:-0.078px;color:#3a4246;">Model</span>
<span class="t" style="left:42.40px;top:130.10px;font-size:8px;line-height:8px;letter-spacing:-0.170px;color:#464e52;">trn_05-0220-19.sldasm, 1.3</span>
<span class="t" style="left:55.00px;top:141.88px;font-size:8px;line-height:8px;letter-spacing:-0.045px;color:#464e52;">trn_89-5623-00.sldprt</span>
<span class="t" style="left:55.00px;top:153.66px;font-size:8px;line-height:8px;letter-spacing:-0.045px;color:#464e52;">trn_10-8923-05.sldprt</span>
<span class="t" style="left:55.00px;top:165.44px;font-size:8px;line-height:8px;letter-spacing:-0.045px;color:#464e52;">trn_55-4895-20.sldprt</span>
<span class="t" style="left:55.00px;top:177.22px;font-size:8px;line-height:8px;letter-spacing:-0.045px;color:#464e52;">trn_10-8923-05.sldprt</span>
<span class="t" style="left:55.00px;top:189.00px;font-size:8px;line-height:8px;letter-spacing:-0.045px;color:#464e52;">trn_45-7513-90.sldprt</span>
<span class="t" style="left:55.00px;top:200.78px;font-size:8px;line-height:8px;letter-spacing:-0.045px;color:#464e52;">trn_01-4623-01.sldprt</span>
<span class="t" style="left:55.00px;top:212.56px;font-size:8px;line-height:8px;letter-spacing:-0.045px;color:#464e52;">trn_01-4623-00.sldprt</span>
<span class="t" style="left:55.00px;top:224.34px;font-size:8px;line-height:8px;letter-spacing:-0.045px;color:#464e52;">trn_01-4623-00.sldprt</span>
<span class="t" style="left:55.00px;top:236.12px;font-size:8px;line-height:8px;letter-spacing:-0.045px;color:#464e52;">trn_01-4623-01.sldprt</span>
<span class="t" style="left:55.00px;top:247.90px;font-size:8px;line-height:8px;letter-spacing:-0.119px;color:#464e52;">trn_04-2620-19.sldasm</span>
<span class="t" style="left:55.00px;top:259.68px;font-size:8px;line-height:8px;letter-spacing:-0.119px;color:#464e52;">trn_04-0120-19.sldasm</span>
<span class="t" style="left:55.00px;top:271.46px;font-size:8px;line-height:8px;letter-spacing:-0.045px;color:#464e52;">trn_01-4623-01.sldprt</span>
<span class="t" style="left:96.50px;top:525.80px;font-size:8.2px;line-height:8.2px;letter-spacing:-0.141px;color:#596165;">Filter</span>
<span class="t" style="left:601.00px;top:114.20px;font-size:8.4px;line-height:8.4px;letter-spacing:-0.203px;color:#4a5256;">Model</span>
<span class="t" style="left:778.20px;top:545.00px;font-size:8.3px;line-height:8.3px;letter-spacing:-0.351px;color:#525a5e;">trn_05-0220-19.sldasm, 1.3</span>
<span class="t" style="left:877.80px;top:545.00px;font-size:8.3px;line-height:8.3px;letter-spacing:-0.769px;color:#525a5e;">in</span>
<span class="t" style="left:892.40px;top:545.00px;font-size:8.3px;line-height:8.3px;letter-spacing:-0.469px;color:#525a5e;">lb</span>
<span class="t" style="left:907.30px;top:545.00px;font-size:8.3px;line-height:8.3px;letter-spacing:-0.391px;color:#525a5e;">1 Selected</span>
<span class="t" style="left:952.90px;top:545.00px;font-size:8.3px;line-height:8.3px;letter-spacing:-0.410px;color:#525a5e;">Smart</span>
<span class="t" style="left:250.30px;top:471.30px;font-size:7.5px;line-height:7.5px;letter-spacing:0.000px;color:#333;">Y</span>
<span class="t" style="left:273.50px;top:501.30px;font-size:7.5px;line-height:7.5px;letter-spacing:0.000px;color:#333;">X</span>
<span class="t" style="left:232.50px;top:507.20px;font-size:7.5px;line-height:7.5px;letter-spacing:0.000px;color:#333;">Z</span>
<span class="t" style="left:738.60px;top:150.20px;font-size:9px;line-height:9px;letter-spacing:0.228px;color:#ffffff;font-weight:bold;">Summary</span>
<span class="t" style="left:675.51px;top:163.20px;font-size:9px;line-height:9px;letter-spacing:-0.628px;color:#222;">Name</span>
<span class="t" style="left:745.21px;top:163.20px;font-size:9px;line-height:9px;letter-spacing:-0.022px;color:#222;">trn_55-4895-20.sldprt</span>
<span class="t" style="left:675.51px;top:176.35px;font-size:9px;line-height:9px;letter-spacing:-0.478px;color:#222;">Area</span>
<span class="t" style="left:745.21px;top:176.35px;font-size:9px;line-height:9px;letter-spacing:-0.013px;color:#222;">41.182 in²</span>
<span class="t" style="left:675.51px;top:189.50px;font-size:9px;line-height:9px;letter-spacing:-0.215px;color:#222;">Volume</span>
<span class="t" style="left:745.21px;top:189.50px;font-size:9px;line-height:9px;letter-spacing:0.094px;color:#222;">4.104 in³</span>
<span class="t" style="left:675.51px;top:202.65px;font-size:9px;line-height:9px;letter-spacing:-0.829px;color:#222;">Mass</span>
<span class="t" style="left:745.21px;top:202.65px;font-size:9px;line-height:9px;letter-spacing:-0.055px;color:#222;">0.148 lb</span>
<span class="t" style="left:675.51px;top:215.80px;font-size:9px;line-height:9px;letter-spacing:-0.154px;color:#222;">Center of Gravity</span>
<span class="t" style="left:745.21px;top:215.80px;font-size:9px;line-height:9px;letter-spacing:0.013px;color:#222;">(-0.013, 0.015, 0.987) in</span>
<span class="t" style="left:675.51px;top:228.95px;font-size:9px;line-height:9px;letter-spacing:-0.398px;color:#222;">Envelope</span>
<span class="t" style="left:745.21px;top:228.95px;font-size:9px;line-height:9px;letter-spacing:0.022px;color:#222;">~(3.406, 3.396, 1.969) in</span>
</div></div></body></html>
